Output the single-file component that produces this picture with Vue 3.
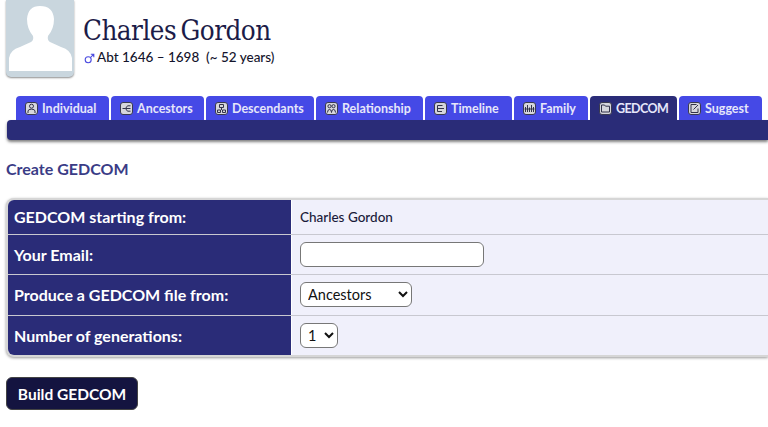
<script setup>
const tabs = [
  { name: 'Individual', icon: 'person' },
  { name: 'Ancestors', icon: 'tree' },
  { name: 'Descendants', icon: 'desc' },
  { name: 'Relationship', icon: 'rel' },
  { name: 'Timeline', icon: 'time' },
  { name: 'Family', icon: 'family' },
  { name: 'GEDCOM', icon: 'folder', active: true },
  { name: 'Suggest', icon: 'edit' },
];
</script>

<template>
  <div class="page">
    <header class="head">
      <div class="avatar">
        <svg viewBox="0 0 68 78" width="68" height="78">
          <path fill="#fff" d="M3 71 L3 58 Q4 50 14 47 L25 42 Q28 40 27 36 Q21 29 21 19 Q22 6 34 6 Q47 6 48 19 Q48 29 42 36 Q41 40 44 42 L55 47 Q65 50 66 58 L66 71 Z" />
        </svg>
      </div>
      <div class="who">
        <h1>Charles Gordon</h1>
        <p>
          <svg class="sex" viewBox="0 0 11 11" width="11" height="11">
            <circle cx="4.2" cy="6.8" r="3" fill="none" stroke="#4a4ae0" stroke-width="1.1" />
            <path d="M6.4 4.6 L9.8 1.2 M6.8 1.2 H9.8 V4.2" fill="none" stroke="#4a4ae0" stroke-width="1.1" />
          </svg>
          <span>Abt 1646 – 1698 &nbsp;(~ 52 years)</span>
        </p>
      </div>
    </header>

    <nav class="tabs">
      <a v-for="t in tabs" :key="t.name" class="tab" :class="{ active: t.active }">
        <svg class="ico" viewBox="0 0 13 13" width="13" height="13">
          <rect x="0.5" y="0.5" width="12" height="12" rx="2.5" fill="#d6d6dc" stroke="#3a3a50" stroke-width="1" />
          <g fill="none" stroke="#33334a" stroke-width="1">
            <template v-if="t.icon === 'person'">
              <circle cx="6.5" cy="4.2" r="2" />
              <path d="M3 11 V9 Q3 7.2 6.5 7.2 Q10 7.2 10 9 V11" />
            </template>
            <path v-else-if="t.icon === 'tree'" d="M2.5 6.5 H5.5 M5.5 6.5 L7.5 3.8 H10.5 M5.5 6.5 H10.5 M5.5 6.5 L7.5 9.2 H10.5" />
            <path v-else-if="t.icon === 'desc'" d="M4.5 2.5 H8.5 V5.5 H4.5 Z M2.5 8 H5.5 V10.5 H2.5 Z M7.5 8 H10.5 V10.5 H7.5 Z M6.5 5.5 V8" />
            <template v-else-if="t.icon === 'rel'">
              <circle cx="4.5" cy="4.2" r="1.6" />
              <circle cx="8.5" cy="4.2" r="1.6" />
              <path d="M2.5 10.5 Q2.5 7.5 4.5 7.5 Q6.5 7.5 6.5 10.5 Q6.5 7.5 8.5 7.5 Q10.5 7.5 10.5 10.5" />
            </template>
            <path v-else-if="t.icon === 'time'" d="M3.5 3.5 H8.5 M3.5 3.5 V9.5 M3.5 6.5 H10 M3.5 9.5 H8" />
            <path v-else-if="t.icon === 'family'" d="M2.5 5 V10 M4.5 3 V10 M6.5 5.5 V10 M8.5 3 V10 M10.5 5 V10 M1.5 7 H11.5" />
            <path v-else-if="t.icon === 'folder'" d="M2.5 10 V3 H5.5 L6.5 4.2 H10.5 V10 Z" />
            <path v-else d="M3 2.5 H8.5 M3 2.5 V10.5 H10 V6.5 M5.5 7.5 L10 3" />
          </g>
        </svg>
        {{ t.name }}
      </a>
    </nav>
    <div class="bar"></div>

    <h2>Create GEDCOM</h2>

    <div class="form">
      <div class="row">
        <div class="label">GEDCOM starting from:</div>
        <div class="value name">Charles Gordon</div>
      </div>
      <div class="row">
        <div class="label">Your Email:</div>
        <div class="value"><input type="text" class="email" /></div>
      </div>
      <div class="row">
        <div class="label">Produce a GEDCOM file from:</div>
        <div class="value">
          <select class="sel wide">
            <option>Ancestors</option>
            <option>Descendants</option>
          </select>
        </div>
      </div>
      <div class="row">
        <div class="label">Number of generations:</div>
        <div class="value">
          <select class="sel narrow">
            <option>1</option>
            <option>2</option>
            <option>3</option>
          </select>
        </div>
      </div>
    </div>

    <button class="build">Build GEDCOM</button>
  </div>
</template>

<style>
html, body {
  margin: 0;
  background: #fff;
  overflow: hidden;
}
</style>

<style scoped>
.page {
  width: 768px;
  height: 427px;
  overflow: hidden;
  font-family: Lato, "Noto Sans", sans-serif;
  color: #1a1a3a;
}

.head {
  display: flex;
  gap: 9px;
  padding-left: 6px;
  height: 96px;
}

.avatar {
  width: 68px;
  height: 77px;
  background: #c9d6de;
  border-radius: 0 0 5px 5px;
  box-shadow: 0 1px 2px rgba(0, 0, 0, 0.45);
  overflow: hidden;
}

.avatar svg {
  display: block;
}

.who h1 {
  margin: 13px 0 0;
  font-family: "DejaVu Serif", serif;
  font-stretch: condensed;
  font-weight: 400;
  font-size: 27.5px;
  line-height: 35px;
  letter-spacing: -0.5px;
  word-spacing: -3px;
  color: #1c1c48;
  white-space: nowrap;
}

.who p {
  margin: 0;
  display: flex;
  align-items: center;
  gap: 2px;
  padding-left: 1px;
  font-size: 13.5px;
  font-weight: 500;
  line-height: 18px;
  color: #14142c;
  white-space: nowrap;
}

.sex {
  margin-top: 2px;
}

.tabs {
  display: grid;
  grid-template-columns: 93px 93px 108px 107px 87px 74px 87px 83px;
  gap: 2px;
  padding-left: 16px;
  height: 24px;
}

.tab {
  display: flex;
  align-items: center;
  gap: 4px;
  height: 24px;
  padding-left: 9px;
  box-sizing: border-box;
  background: #4549e6;
  border-radius: 4px 4px 0 0;
  color: #e6e6fa;
  font-size: 12.5px;
  font-weight: 700;
  white-space: nowrap;
}

.tab.active {
  background: #2a2c78;
  letter-spacing: -0.6px;
}

.bar {
  height: 20px;
  margin-left: 7px;
  background: #2a2c78;
  border-radius: 4px 0 0 4px;
  box-shadow: 0 2px 3px rgba(0, 0, 0, 0.5);
}

h2 {
  margin: 18px 0 0 6px;
  font-size: 16px;
  line-height: 22px;
  font-weight: 700;
  color: #3a3c86;
}

.form {
  margin: 18px 0 0 6px;
  border: 2px solid #d6d6d6;
  border-right: none;
  border-radius: 8px 0 0 8px;
  overflow: hidden;
  box-shadow: 0 1px 3px rgba(0, 0, 0, 0.4);
  background: #f0f0fb;
}

.row {
  display: flex;
  height: 39px;
  border-bottom: 1px solid #c8c8d0;
}

.row:first-child {
  height: 34px;
}

.row:nth-child(3) {
  height: 40px;
}

.row:last-child {
  border-bottom: none;
}

.label {
  width: 284px;
  flex: none;
  padding: 0 0 1px 6px;
  box-sizing: border-box;
  background: #2a2c78;
  color: #fff;
  font-size: 16px;
  font-weight: 700;
  display: flex;
  align-items: center;
  border-right: 1px solid #fff;
}

.value {
  padding: 0 0 1px 8px;
  display: flex;
  align-items: center;
  font-size: 13.5px;
}

.name {
  font-weight: 500;
}

.email {
  width: 184px;
  height: 25px;
  box-sizing: border-box;
  border: 1px solid #777;
  border-radius: 6px;
  background: #fff;
}

.sel {
  height: 25px;
  box-sizing: border-box;
  border: 1px solid #777;
  border-radius: 6px;
  background: #fff;
  font-family: inherit;
  font-size: 14.5px;
  color: #111;
  padding-left: 3px;
}

.sel.wide {
  width: 112px;
}

.sel.narrow {
  width: 38px;
}

.build {
  display: block;
  margin: 20px 0 0 6px;
  width: 132px;
  height: 33px;
  border: 1px solid #444;
  border-radius: 6px;
  background: #141440;
  color: #fff;
  font-family: inherit;
  font-size: 15.5px;
  font-weight: 700;
  padding: 0;
}
</style>
